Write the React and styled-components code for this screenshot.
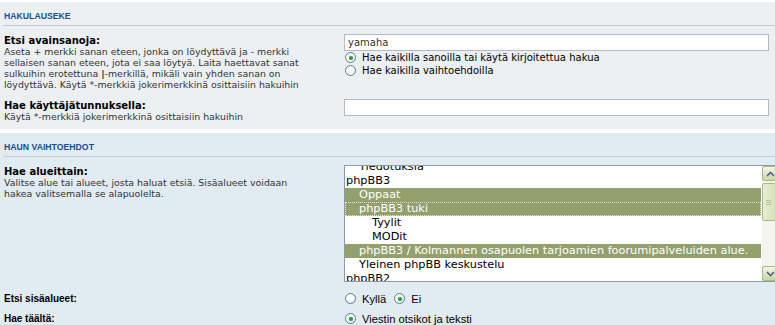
import React from 'react';
import styled, { createGlobalStyle } from 'styled-components';

const GlobalStyle = createGlobalStyle`
  html, body {
    margin: 0;
    padding: 0;
    background: #ffffff;
    overflow: hidden;
  }
  body {
    padding-top: 2px;
    font-family: "DejaVu Sans", Verdana, sans-serif;
    color: #333333;
  }
`;

const Panel = styled.div`
  background: ${(p) => p.$bg};
  padding: 8px 0 7px 0;
  margin-bottom: 4px;
`;

const Heading = styled.h3`
  margin: 0 0 8px 3px;
  padding: 0 0 3px 1px;
  border-bottom: 1px solid #cccccc;
  font-family: "Liberation Sans", Arial, sans-serif;
  font-size: 8.7px;
  line-height: 12px;
  font-weight: bold;
  text-transform: uppercase;
  color: #115098;
`;

const Row = styled.div`
  display: flex;
  align-items: flex-start;
  margin-bottom: ${(p) => p.$gap || 0}px;
`;

const Term = styled.div`
  width: 314px;
  flex: none;
  padding: 1px 26px 0 4px;
  font-size: 9.4px;
  line-height: 11px;
`;

const Label = styled.div`
  font-weight: bold;
  color: #000000;
  font-family: ${(p) => (p.$narrow ? '"Liberation Sans", Arial, sans-serif' : 'inherit')};
  font-size: 10px;
`;

const Desc = styled.div`
  color: #333333;
`;

const Field = styled.div`
  flex: 1;
  min-width: 0;
`;

const TextBox = styled.div`
  width: 417px;
  height: 15px;
  border: 1px solid #b4bac0;
  background: #ffffff;
  padding: 0 3px;
  font-size: 10px;
  line-height: 15px;
  color: #333333;
`;

const RadioLine = styled.label`
  display: flex;
  align-items: center;
  height: 13px;
  font-family: ${(p) => (p.$narrow ? '"Liberation Sans", Arial, sans-serif' : 'inherit')};
  font-size: ${(p) => (p.$narrow ? '11.2px' : '10px')};
  color: #000000;
`;

const RadioText = styled.span`
  margin-right: 7px;
`;

const Radio = styled.span`
  width: 11px;
  height: 11px;
  box-sizing: border-box;
  border-radius: 50%;
  border: 1px solid #5e7a99;
  background: radial-gradient(circle at 40% 40%, #ffffff 40%, #dfe3e8 100%);
  margin: 0 6px 0 1px;
  flex: none;
  display: flex;
  align-items: center;
  justify-content: center;
  &::after {
    content: '';
    display: ${(p) => (p.$checked ? 'block' : 'none')};
    width: 4px;
    height: 4px;
    border-radius: 50%;
    background: #22a830;
    box-shadow: 0 0 1px #5fd060;
  }
`;

const ListBox = styled.div`
  display: flex;
  width: 433px;
  height: 115px;
  border: 1px solid #8e9aa6;
  background: #ffffff;
  overflow: hidden;
`;

const Options = styled.div`
  flex: 1;
  overflow: hidden;
  padding-right: 1px;
`;

const OptionList = styled.div`
  margin-top: -6px;
`;

const Option = styled.div`
  height: 14px;
  line-height: 14px;
  font-size: 11.3px;
  white-space: nowrap;
  padding-left: ${(p) => 1 + p.$level * 13}px;
  color: ${(p) => (p.$selected ? '#ffffff' : '#000000')};
  background: ${(p) => (p.$selected ? '#949f6e' : 'transparent')};
  outline: ${(p) => (p.$focused ? '1px dotted #e4e8d2' : 'none')};
  outline-offset: -1px;
`;

const ScrollBar = styled.div`
  width: 16px;
  flex: none;
  display: flex;
  flex-direction: column;
  background: #f4f4ee;
`;

const ScrollButton = styled.div`
  height: 15px;
  border: 1px solid #a8bb85;
  border-radius: 2px;
  background: linear-gradient(#f2f6e6, #c9d7a8);
  display: flex;
  align-items: center;
  justify-content: center;
  box-sizing: border-box;
`;

const Thumb = styled(ScrollButton)`
  height: 38px;
  margin-top: 2px;
  background: linear-gradient(90deg, #e6eed2, #d3dfb7);
  flex-direction: column;
  align-items: flex-start;
  padding-left: 3px;
  gap: 1px;
  span {
    display: block;
    width: 5px;
    height: 1px;
    background: #b6c59a;
  }
`;

const Spacer = styled.div`
  flex: 1;
`;

const Arrow = ({ up }) => (
  <svg width="9" height="6" viewBox="0 0 9 6">
    <path
      d={up ? 'M1 5 L4.5 1.5 L8 5' : 'M1 1 L4.5 4.5 L8 1'}
      fill="none"
      stroke="#4d6185"
      strokeWidth="1.6"
    />
  </svg>
);

const forums = [
  { name: 'Tiedotuksia', level: 1 },
  { name: 'phpBB3', level: 0 },
  { name: 'Oppaat', level: 1, selected: true },
  { name: 'phpBB3 tuki', level: 1, selected: true, focused: true },
  { name: 'Tyylit', level: 2 },
  { name: 'MODit', level: 2 },
  { name: 'phpBB3 / Kolmannen osapuolen tarjoamien foorumipalveluiden alue.', level: 1, selected: true },
  { name: 'Yleinen phpBB keskustelu', level: 1 },
  { name: 'phpBB2', level: 0 },
];

function ForumList() {
  return (
    <ListBox>
      <Options>
        <OptionList>
          {forums.map((f) => (
            <Option key={f.name} $level={f.level} $selected={f.selected} $focused={f.focused}>
              {f.name}
            </Option>
          ))}
        </OptionList>
      </Options>
      <ScrollBar>
        <ScrollButton><Arrow up /></ScrollButton>
        <Thumb>
          <span /><span /><span />
        </Thumb>
        <Spacer />
        <ScrollButton><Arrow /></ScrollButton>
      </ScrollBar>
    </ListBox>
  );
}

export default function App() {
  return (
    <>
      <GlobalStyle />
      <Panel $bg="#ecf0f3">
        <Heading>Hakulauseke</Heading>
        <Row $gap={9}>
          <Term>
            <Label>Etsi avainsanoja:</Label>
            <Desc>
              Aseta + merkki sanan eteen, jonka on löydyttävä ja - merkki sellaisen sanan eteen, jota ei saa
              löytyä. Laita haettavat sanat sulkuihin erotettuna <strong>|</strong>-merkillä, mikäli vain
              yhden sanan on löydyttävä. Käytä *-merkkiä jokerimerkkinä osittaisiin hakuihin
            </Desc>
          </Term>
          <Field>
            <TextBox>yamaha</TextBox>
            <RadioLine>
              <Radio $checked />
              <RadioText>Hae kaikilla sanoilla tai käytä kirjoitettua hakua</RadioText>
            </RadioLine>
            <RadioLine>
              <Radio />
              <RadioText>Hae kaikilla vaihtoehdoilla</RadioText>
            </RadioLine>
          </Field>
        </Row>
        <Row>
          <Term>
            <Label>Hae käyttäjätunnuksella:</Label>
            <Desc>Käytä *-merkkiä jokerimerkkinä osittaisiin hakuihin</Desc>
          </Term>
          <Field>
            <TextBox />
          </Field>
        </Row>
      </Panel>
      <Panel $bg="#e1ebf2">
        <Heading>Haun vaihtoehdot</Heading>
        <Row $gap={10}>
          <Term>
            <Label>Hae alueittain:</Label>
            <Desc>
              Valitse alue tai alueet, josta haluat etsiä. Sisäalueet voidaan hakea valitsemalla se
              alapuolelta.
            </Desc>
          </Term>
          <Field>
            <ForumList />
          </Field>
        </Row>
        <Row $gap={7}>
          <Term>
            <Label $narrow>Etsi sisäalueet:</Label>
          </Term>
          <Field>
            <RadioLine $narrow>
              <Radio />
              <RadioText>Kyllä</RadioText>
              <Radio $checked />
              <RadioText>Ei</RadioText>
            </RadioLine>
          </Field>
        </Row>
        <Row>
          <Term>
            <Label $narrow>Hae täältä:</Label>
          </Term>
          <Field>
            <RadioLine $narrow>
              <Radio $checked />
              <RadioText>Viestin otsikot ja teksti</RadioText>
            </RadioLine>
          </Field>
        </Row>
      </Panel>
    </>
  );
}
